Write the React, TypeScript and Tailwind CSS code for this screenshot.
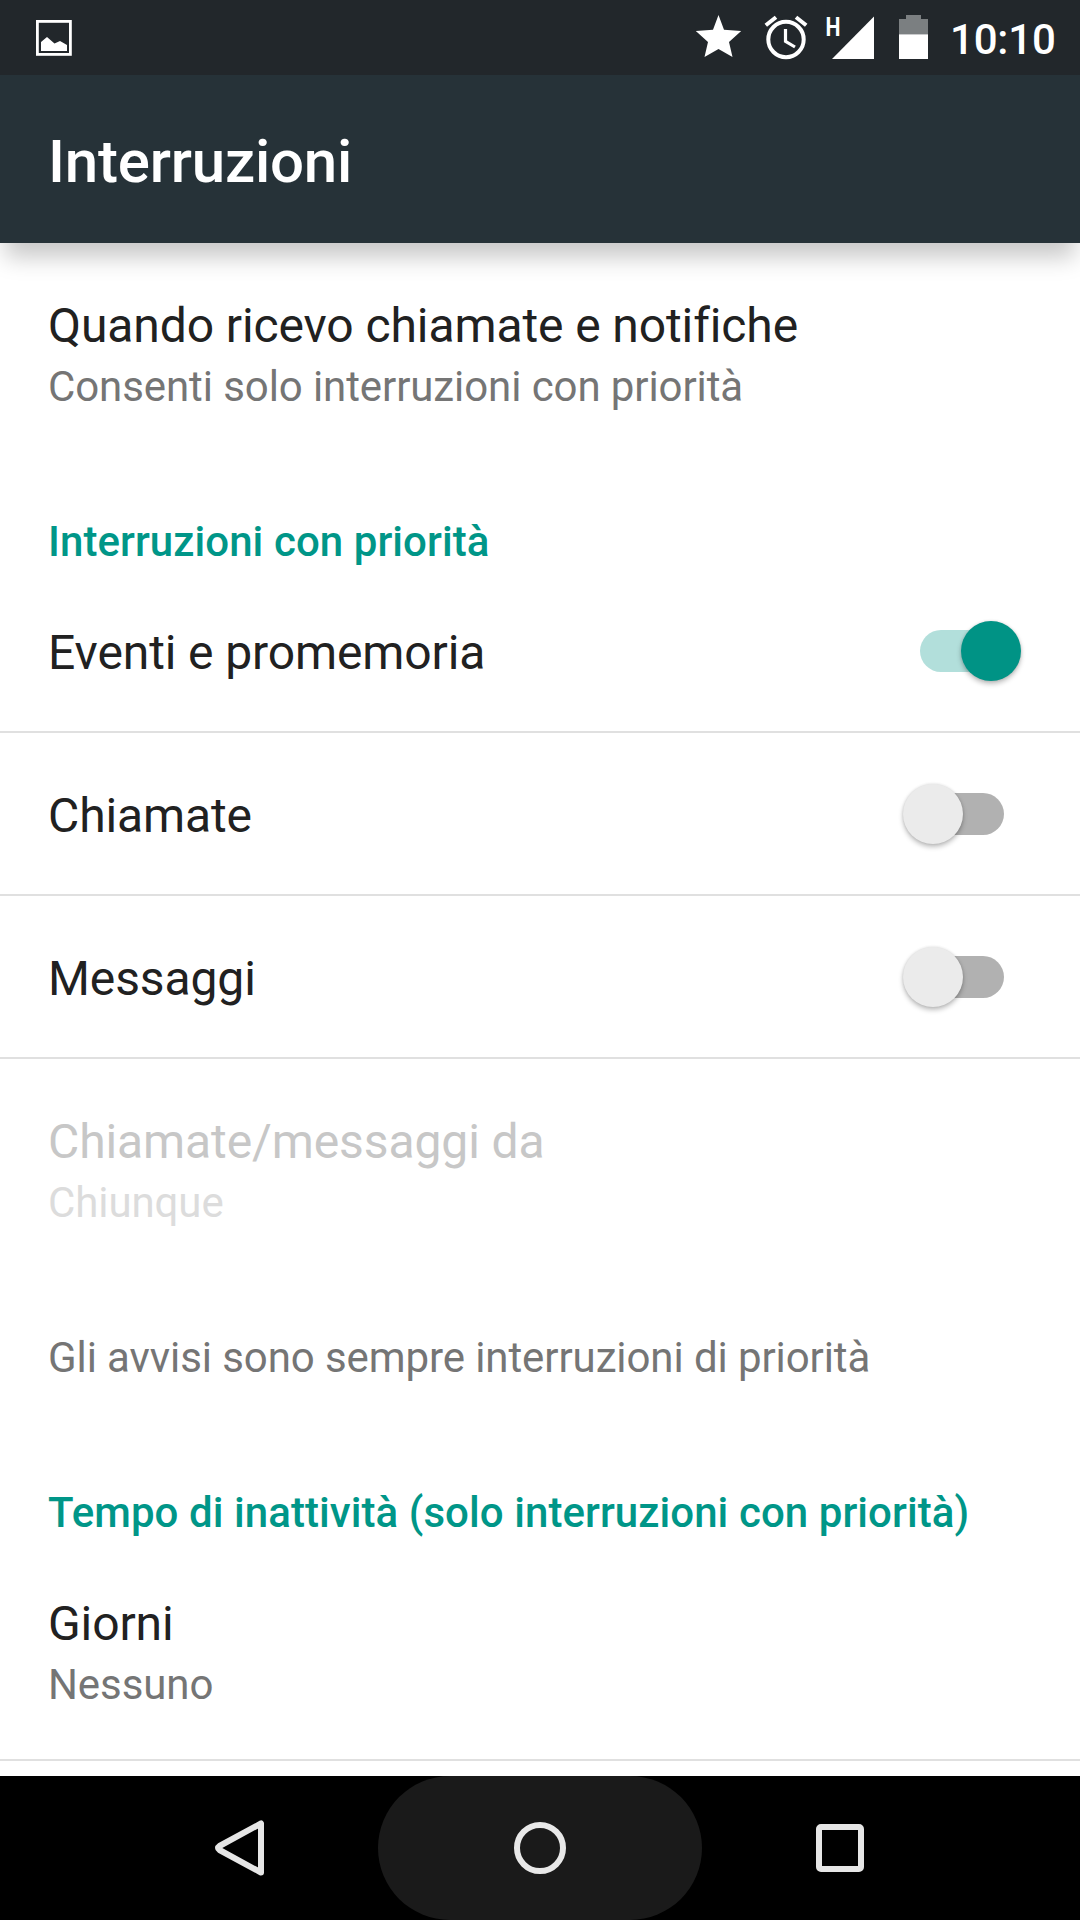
import { useState } from "react";

function StatusBar() {
  return (
    <div className="flex h-[75px] shrink-0 items-start justify-between bg-[#22272b]">
      <svg width="120" height="75" viewBox="0 0 120 75" fill="none" aria-hidden="true">
        <rect x="37.4" y="21.4" width="33" height="33" stroke="#fff" strokeWidth="2.8" />
        <path d="M41 51V42L47 37L54.5 43.5L60 41L67 45V51Z" fill="#fff" />
      </svg>
      <div className="flex">
        <svg width="270" height="75" viewBox="680 0 270 75" fill="none" aria-hidden="true">
          <path
            d="M718.5 15L724 29.7L741.2 31L729 42L732.5 57L718.5 49L704.5 57L708 42L695.8 31L713 29.7Z"
            fill="#fff"
          />
          <g stroke="#fff">
            <circle cx="786" cy="39.5" r="17.7" strokeWidth="4" />
            <path d="M765.8 25.3L776 17.2M796 17.2L806.2 25.3" strokeWidth="4" />
            <path d="M785.5 29V41.3L795 47" strokeWidth="3.2" />
          </g>
          <text
            x="825.5"
            y="35.5"
            textLength="15"
            lengthAdjust="spacingAndGlyphs"
            className="fill-white font-['Roboto'] text-[26px] font-bold"
          >
            H
          </text>
          <path d="M832 59L874 16.5V59Z" fill="#fff" />
          <path d="M906 15H921V19H928V34.5H899V19H906Z" fill="#7b7f81" />
          <path d="M899 34.3H928V59H899Z" fill="#fff" />
        </svg>
        <span className="w-[130px] pt-[15px] text-[42px] leading-[49px] font-medium tracking-[-0.2px] text-white">
          10:10
        </span>
      </div>
    </div>
  );
}

type SwitchProps = {
  label: string;
  checked: boolean;
  onChange: (v: boolean) => void;
};

function Switch({ label, checked, onChange }: SwitchProps) {
  return (
    <button
      type="button"
      role="switch"
      aria-label={label}
      aria-checked={checked}
      className="relative flex h-[60px] w-[120px] items-center"
      onClick={() => onChange(!checked)}
    >
      <span className={`ml-[18px] h-[42px] w-[84px] rounded-full ${checked ? "bg-[#b2dfdb]" : "bg-[#b1b1b1]"}`} />
      <span
        className={`absolute top-0 size-[60px] rounded-full shadow-[0_3px_5px_rgba(0,0,0,0.25),0_0_3px_rgba(0,0,0,0.12)] ${
          checked ? "right-px bg-[#009385]" : "left-[0.5px] bg-[#ebebeb]"
        }`}
      />
    </button>
  );
}

function SwitchRow(props: SwitchProps) {
  return (
    <div className="flex h-[163px] items-center justify-between border-b-2 border-[#e0e0e0] pr-[58px] pl-12">
      <span className="pt-[3px] text-[48px] leading-[57px] tracking-[-0.11px] text-[#212121]">{props.label}</span>
      <Switch {...props} />
    </div>
  );
}

type RowProps = {
  title: string;
  summary: string;
  disabled?: boolean;
};

function Row({ title, summary, disabled }: RowProps) {
  return (
    <div className="h-[218px] px-12 pt-[54px]">
      <div
        className={`text-[48px] leading-[57px] tracking-[-0.1px] [font-variant-ligatures:common-ligatures] ${
          disabled ? "text-[#c7c7c7]" : "text-[#212121]"
        }`}
      >
        {title}
      </div>
      <div
        className={`mt-2 text-[42px] leading-[49px] tracking-[-0.09px] ${disabled ? "text-[#dcdcdc]" : "text-[#757575]"}`}
      >
        {summary}
      </div>
    </div>
  );
}

function SectionHeader({ children }: { children: string }) {
  return (
    <h2 className="h-[109px] px-12 pt-14 text-[42px] leading-[49px] font-medium tracking-[0.07px] text-[#009688]">
      {children}
    </h2>
  );
}

function NavBar() {
  return (
    <nav className="flex h-36 shrink-0 items-center justify-center bg-black">
      <button type="button" aria-label="Indietro" className="flex h-36 w-[276px] items-center justify-center">
        <svg width="60" height="60" viewBox="210 1818 60 60" fill="none">
          <path
            d="M261 1823.5V1872.5L219.5 1850Q216.5 1848 219.5 1846Z"
            stroke="#e6e6e6"
            strokeWidth="6"
            strokeLinejoin="round"
          />
        </svg>
      </button>
      <button
        type="button"
        aria-label="Home"
        className="flex h-36 w-[324px] items-center justify-center rounded-[72px] bg-[#1a1a1a]"
      >
        <span className="size-[52px] rounded-full border-6 border-[#e8e8e8]" />
      </button>
      <button type="button" aria-label="Recenti" className="flex h-36 w-[276px] items-center justify-center">
        <span className="size-12 rounded-[5px] border-6 border-[#e6e6e6]" />
      </button>
    </nav>
  );
}

export default function App() {
  const [events, setEvents] = useState(true);
  const [calls, setCalls] = useState(false);
  const [messages, setMessages] = useState(false);

  return (
    <div className="flex h-[1920px] w-[1080px] flex-col overflow-hidden bg-white font-['Roboto',sans-serif]">
      <StatusBar />
      <header className="z-10 h-[168px] shrink-0 bg-[#263238] px-12 pt-[52px] shadow-[0_19px_22px_-5px_rgba(0,0,0,0.22)]">
        <h1 className="text-[60px] leading-[70px] font-medium tracking-[-0.2px] text-white">Interruzioni</h1>
      </header>
      <main className="flex-1 overflow-hidden">
        <Row title="Quando ricevo chiamate e notifiche" summary="Consenti solo interruzioni con priorità" />
        <SectionHeader>Interruzioni con priorità</SectionHeader>
        <SwitchRow label="Eventi e promemoria" checked={events} onChange={setEvents} />
        <SwitchRow label="Chiamate" checked={calls} onChange={setCalls} />
        <SwitchRow label="Messaggi" checked={messages} onChange={setMessages} />
        <Row title="Chiamate/messaggi da" summary="Chiunque" disabled />
        <p className="h-[155px] px-12 pt-14 text-[42px] leading-[49px] tracking-[-0.09px] text-[#757575]">
          Gli avvisi sono sempre interruzioni di priorità
        </p>
        <SectionHeader>Tempo di inattività (solo interruzioni con priorità)</SectionHeader>
        <Row title="Giorni" summary="Nessuno" />
        <div className="h-0.5 bg-[#e0e0e0]" />
      </main>
      <NavBar />
    </div>
  );
}
